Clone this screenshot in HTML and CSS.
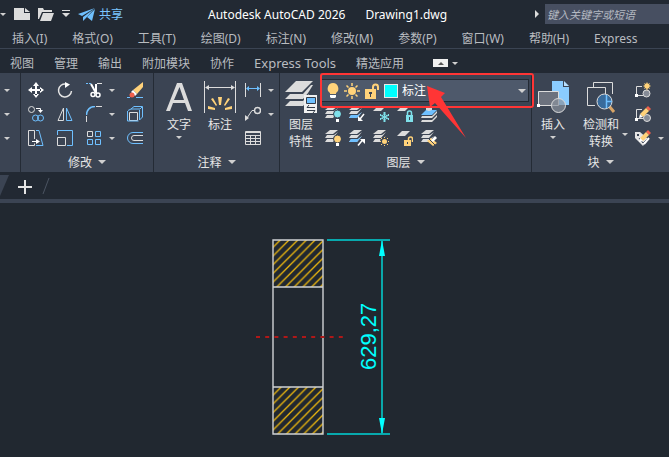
FILE: index.html
```html
<!DOCTYPE html>
<html lang="zh-CN">
<head>
    <meta charset="UTF-8">
    <meta name="viewport" content="width=device-width, initial-scale=1.0">
    <title>Autodesk AutoCAD 2026 - Drawing1.dwg</title>
    <link rel="stylesheet" href="styles.css">
</head>
<body>

    <!-- shared shapes -->
    <svg class="defs" width="0" height="0" aria-hidden="true">
        <defs>
            <g id="sheets">
                <path d="M5 0h8L8 4H0z"/>
                <path d="M2 5h7l4-3-5 6H0z"/>
                <path d="M2 9h7l4-3-5 6H0z"/>
            </g>
            <g id="pencil">
                <path d="M13 0l3 3-2 2-3-3z" fill="#f0604c"/>
                <path d="M11 2l3 3-6 6-3-3z" fill="#ffd27a"/>
                <path d="M5 8l3 3-4 1z" fill="#fff"/>
            </g>
        </defs>
    </svg>

    <header class="title-bar">
        <div class="quick-access">
            <span class="caret"></span>
            <button class="icon-btn" aria-label="新建">
                <svg width="16" height="12" viewBox="0 0 16 12" fill="#dcdcdc"><path d="M0 0h10v5h6v7H0z"/><path d="M11 0l5 4h-5z"/></svg>
            </button>
            <button class="icon-btn" aria-label="打开">
                <svg width="16" height="13" viewBox="0 0 16 13" fill="#dcdcdc"><path d="M0 0h5l1 2h8v2H4L1 11H0z"/><path d="M5 5h11l-3 8H2z"/></svg>
            </button>
            <button class="icon-btn" aria-label="自定义快速访问工具栏">
                <svg width="8" height="8" viewBox="0 0 8 8" fill="#dcdcdc"><path d="M0 0h8v1H0zM0 3h8L4 7z"/></svg>
            </button>
            <button class="share">
                <svg width="17" height="13" viewBox="0 0 17 13" fill="#6fc0ff"><path d="M17 0L0 6l4 2z"/><path d="M16 1L5 9v4l3-3z"/><path d="M17 1l-3 12-5-4z"/></svg>
                共享
            </button>
        </div>
        <div class="app-title"><span>Autodesk AutoCAD 2026</span><span>Drawing1.dwg</span></div>
        <div class="search">
            <span class="search-arrow"></span>
            <input type="text" placeholder="键入关键字或短语" aria-label="搜索">
        </div>
    </header>

    <nav class="menu-bar">
        <a href="#">插入(I)</a>
        <a href="#">格式(O)</a>
        <a href="#">工具(T)</a>
        <a href="#">绘图(D)</a>
        <a href="#">标注(N)</a>
        <a href="#">修改(M)</a>
        <a href="#">参数(P)</a>
        <a href="#">窗口(W)</a>
        <a href="#">帮助(H)</a>
        <a href="#">Express</a>
    </nav>

    <nav class="ribbon-tabs">
        <a href="#">视图</a>
        <a href="#">管理</a>
        <a href="#">输出</a>
        <a href="#">附加模块</a>
        <a href="#">协作</a>
        <a href="#" class="tab-latin">Express Tools</a>
        <a href="#">精选应用</a>
        <button class="minimize" aria-label="最小化功能区">
            <span class="minimize-box"></span><span class="caret"></span>
        </button>
    </nav>

    <div class="ribbon">
        <section class="panel">
            <div class="panel-body draw-body">
                <div class="tool-row"><span class="caret"></span></div>
                <div class="tool-row"><span class="caret"></span></div>
                <div class="tool-row"><span class="caret"></span></div>
            </div>
        </section>

        <!-- modify -->
        <section class="panel">
            <div class="panel-body modify-body">
                <div class="tool-grid modify-grid">
                    <button class="icon-btn" aria-label="移动">
                        <svg width="16" height="16" viewBox="0 0 16 16" fill="#fff"><path d="M7 3h2v10H7zM3 7h10v2H3zM8 0l3 4H5zM8 16l3-4H5zM0 8l4-3v6zM16 8l-4-3v6z"/></svg>
                    </button>
                    <button class="icon-btn" aria-label="旋转">
                        <svg width="16" height="16" viewBox="0 0 16 16"><path d="M9 2a6.500 6.500 0 1 0 5.500 7" fill="none" stroke="#e4e4e4" stroke-width="1.500"/><path d="M8 0l5 2.500L8 6z" fill="#fff"/></svg>
                    </button>
                    <button class="icon-btn" aria-label="修剪">
                        <svg width="16" height="16" viewBox="0 0 16 16"><path d="M0 1.500h6" stroke="#6fc0ff" stroke-dasharray="2 1"/><path d="M11 1.500h5" stroke="#e4e4e4"/><path d="M5 2l5 9M10 2v9" stroke="#fff" stroke-width="2"/><circle cx="7" cy="12.500" r="2" fill="none" stroke="#fff" stroke-width="1.500"/><circle cx="12" cy="13" r="2" fill="none" stroke="#fff" stroke-width="1.500"/></svg>
                    </button>
                    <span class="caret"></span>
                    <button class="icon-btn" aria-label="删除">
                        <svg width="16" height="16" viewBox="0 0 16 16"><path d="M0 15.500h3M9 15.500h7" stroke="#6fc0ff"/><path d="M16 0v5l-6 7-4-4z" fill="#ffd27a"/><path d="M6 8l4 4-2 2-4-4z" fill="#fff"/><circle cx="5" cy="13" r="2.500" fill="#f0604c"/></svg>
                    </button>

                    <button class="icon-btn" aria-label="复制">
                        <svg width="16" height="16" viewBox="0 0 16 16" fill="none"><circle cx="3.500" cy="3.500" r="3" stroke="#dcdcdc"/><path d="M8 2.500h4.500V5" stroke="#fff"/><path d="M10 4h5l-2.500 3z" fill="#fff"/><circle cx="7.500" cy="12" r="3" stroke="#6fc0ff"/><circle cx="12.500" cy="12" r="3" stroke="#6fc0ff"/></svg>
                    </button>
                    <button class="icon-btn" aria-label="镜像">
                        <svg width="16" height="16" viewBox="0 0 16 16" fill="none"><path d="M6.500 2v12.500H1z" stroke="#dcdcdc"/><path d="M9.500 2v12.500H15z" stroke="#6fc0ff"/></svg>
                    </button>
                    <button class="icon-btn" aria-label="圆角">
                        <svg width="16" height="16" viewBox="0 0 16 16" fill="none"><path d="M.5 9C.5 4 4 .5 9 .5" stroke="#6fc0ff" stroke-width="1.500"/><path d="M10 .5h6M.5 10v6" stroke="#dcdcdc"/></svg>
                    </button>
                    <span class="caret"></span>
                    <button class="icon-btn" aria-label="分解">
                        <svg width="16" height="16" viewBox="0 0 16 16" fill="none"><path d="M4 3l3-2.500h8.500L13 3zM15.500 1v10l-3 3M12.500 4v10M1 4.500l3-1.500" stroke="#6fc0ff"/><path d="M2.500 6.500h8v8h-8z" stroke="#dcdcdc"/><path d="M.5 5v10h11" stroke="#6fc0ff"/></svg>
                    </button>

                    <button class="icon-btn" aria-label="拉伸">
                        <svg width="16" height="16" viewBox="0 0 16 16" fill="none"><path d="M6.500 9V.5h-6v15h6v-2" stroke="#dcdcdc"/><path d="M8 .5h3l4 15H8" stroke="#6fc0ff"/><path d="M4 11.500h5" stroke="#fff"/><path d="M8 9l4 2.500L8 14z" fill="#fff"/></svg>
                    </button>
                    <button class="icon-btn" aria-label="缩放">
                        <svg width="16" height="16" viewBox="0 0 16 16" fill="none"><path d="M.5 5V.5h15v15H10" stroke="#6fc0ff"/><path d="M.5 7.500h8v8h-8z" stroke="#dcdcdc"/></svg>
                    </button>
                    <button class="icon-btn" aria-label="阵列">
                        <svg width="16" height="16" viewBox="0 0 16 16" fill="none"><path d="M1.500 1.500h5v5h-5z" stroke="#dcdcdc"/><path d="M9.500 1.500h5v5h-5zM1.500 9.500h5v5h-5zM9.500 9.500h5v5h-5z" stroke="#6fc0ff"/></svg>
                    </button>
                    <span class="caret"></span>
                    <button class="icon-btn" aria-label="偏移">
                        <svg width="16" height="16" viewBox="0 0 16 16" fill="none"><path d="M16 2.500H6a5.500 5.500 0 0 0 0 11h10" stroke="#6fc0ff"/><path d="M16 5.500H7a2.500 2.500 0 0 0 0 5h9" stroke="#dcdcdc"/></svg>
                    </button>
                </div>
            </div>
            <button class="panel-title">修改<span class="caret caret-lg"></span></button>
        </section>

        <!-- annotation -->
        <section class="panel">
            <div class="panel-body annotate-body">
                <button class="big-btn">
                    <svg width="32" height="32" viewBox="0 0 32 32"><path d="M3 30L14 2h5l10 28h-4l-3-8H10l-3 8zM11 19h10L16.500 6z" fill="#dcdcdc" fill-rule="evenodd"/></svg>
                    <span>文字</span>
                    <span class="caret"></span>
                </button>
                <button class="big-btn">
                    <svg width="32" height="32" viewBox="0 0 32 32"><path d="M.5 0v32M31.500 0v32M3 6.500h26" stroke="#dcdcdc"/><path d="M1 6.500l4-2.500v5zM31 6.500L27 4v5z" fill="#dcdcdc"/><path d="M14 16h4l-1 8h-2zM7 18l2-1 4 7-1 1zM26 18l-2-1-4 7 1 1zM4 25l7 2v2l-7-1zM28 25l-7 2v2l7-1z" fill="#ffd27a"/></svg>
                    <span>标注</span>
                </button>
                <div class="tool-grid small-grid">
                    <button class="icon-btn" aria-label="线性">
                        <svg width="16" height="16" viewBox="0 0 16 16"><path d="M.5 1v14M15.500 1v14" stroke="#dcdcdc"/><path d="M2 6.500h12" stroke="#6fc0ff"/><path d="M1 6.500L4 4v5zM15 6.500L12 4v5z" fill="#6fc0ff"/></svg>
                    </button>
                    <span class="caret"></span>
                    <button class="icon-btn" aria-label="引线">
                        <svg width="16" height="16" viewBox="0 0 16 16" fill="none"><circle cx="12.500" cy="4.500" r="3" stroke="#dcdcdc" stroke-width="1.500"/><path d="M9.500 4.500H7L2 12" stroke="#dcdcdc"/><path d="M0 15V9l4 3z" fill="#dcdcdc"/></svg>
                    </button>
                    <span class="caret"></span>
                    <button class="icon-btn" aria-label="表格">
                        <svg width="16" height="16" viewBox="0 0 16 16" fill="none" stroke="#dcdcdc"><path d="M.5 1.500h15v13H.5zM.5 2.500h15M.5 5.500h15M.5 8.500h15M.5 11.500h15M5.500 5v10M10.500 5v10"/></svg>
                    </button>
                </div>
            </div>
            <button class="panel-title">注释<span class="caret caret-lg"></span></button>
        </section>

        <!-- layers -->
        <section class="panel layers-panel">
            <div class="panel-body layers-body">
                <button class="big-btn">
                    <svg width="32" height="32" viewBox="0 0 32 32"><g fill="#dcdcdc"><path d="M11 0h17L17 11H0z"/><path d="M5 13h13l8-9h2l-5 8-5 6H0z"/><path d="M5 20h13l6-7v5l-6 7H0z"/></g><path d="M19 14h13v18H19z" fill="#f0f0f0"/><path d="M21.500 16.500h9v6h-9z" fill="#6fc0ff" stroke="#333b48"/><path d="M22 26.500h8M22 29.500h8M24 24l-2 2.500M28 32l2-2.500" stroke="#333b48"/></svg>
                    <span>图层</span>
                    <span>特性</span>
                </button>
                <div class="layer-tools">
                    <div class="layer-combo">
                        <svg width="14" height="16" viewBox="0 0 14 16"><path d="M7 0a5.500 5.500 0 0 1 3 10v1H4v-1A5.500 5.500 0 0 1 7 0z" fill="#ffd27a"/><path d="M4 12h6v2l-1 1H5l-1-1z" fill="#fff"/></svg>
                        <svg width="16" height="16" viewBox="0 0 16 16"><circle cx="8" cy="8" r="4" fill="#ffd27a"/><path d="M8 0v3M8 13v3M0 8h3M13 8h3M2.500 2.500l2 2M11.500 11.500l2 2M2.500 13.500l2-2M11.500 4.500l2-2" stroke="#ffd27a" stroke-width="1.500"/></svg>
                        <svg width="16" height="16" viewBox="0 0 16 16"><path d="M9 7V4a2.500 2.500 0 0 1 5 0v3" fill="none" stroke="#ffd27a" stroke-width="2"/><path d="M1 6h11v10H1z" fill="#ffd27a"/><path d="M5 9h3v2H7v3H6v-3H5z" fill="#3b4453"/></svg>
                        <span class="swatch"></span>
                        <select aria-label="图层">
                            <option>标注</option>
                        </select>
                        <span class="caret caret-lg"></span>
                    </div>
                    <div class="layer-grid">
                        <button class="icon-btn" aria-label="关">
                            <svg width="16" height="16" viewBox="0 0 16 16"><use href="#sheets" fill="#dcdcdc"/><circle cx="12.500" cy="8" r="4" fill="#7fe0ea" stroke="#3b4453"/><path d="M11 13h3v3h-3z" fill="#fff"/></svg>
                        </button>
                        <button class="icon-btn" aria-label="置为当前">
                            <svg width="16" height="16" viewBox="0 0 16 16"><use href="#sheets" fill="#dcdcdc"/><path d="M2 9h7l4-3-5 6H0z" fill="#6fc0ff"/><path d="M15 8l-4 5" stroke="#fff" stroke-width="1.500"/><path d="M9 10v5h5z" fill="#fff"/></svg>
                        </button>
                        <button class="icon-btn" aria-label="冻结">
                            <svg width="16" height="16" viewBox="0 0 16 16"><path d="M5 0h8L8 5H0z" fill="#dcdcdc"/><g fill="none" stroke="#7fe0ea"><circle cx="11.500" cy="11" r="2.500"/><path d="M11.500 6v10M7 8.500l9 5M7 13.500l9-5M10 7h3M10 15h3M7.500 10v-2M15.500 10v-2M7.500 12v2M15.500 12v2"/></g></svg>
                        </button>
                        <button class="icon-btn" aria-label="锁定">
                            <svg width="16" height="16" viewBox="0 0 16 16"><path d="M5 0h8L8 5H0z" fill="#dcdcdc"/><path d="M10.500 9V7a2 2 0 0 1 4 0v2" fill="none" stroke="#7fe0ea" stroke-width="1.500"/><path d="M9 9h7v7H9z" fill="#7fe0ea"/><path d="M12 11h1v3h-1z" fill="#3b4453"/></svg>
                        </button>
                        <button class="icon-btn" aria-label="匹配图层">
                            <svg width="16" height="16" viewBox="0 0 16 16"><path d="M5 4h11l-5 5H0z" fill="#6fc0ff"/><path d="M5 0h6v4l-3 1-3-1z" fill="#dcdcdc"/><path d="M1 10h10l5-5v2l-5 5H0zM1 14h10l5-5v2l-5 5H0z" fill="#dcdcdc"/></svg>
                        </button>
                        <button class="icon-btn" aria-label="打开所有图层">
                            <svg width="16" height="16" viewBox="0 0 16 16"><use href="#sheets" fill="#dcdcdc"/><circle cx="12.500" cy="9" r="4" fill="#ffd27a" stroke="#3b4453"/><path d="M11 13h3v3h-3z" fill="#fff"/></svg>
                        </button>
                        <button class="icon-btn" aria-label="更改为当前图层">
                            <svg width="16" height="16" viewBox="0 0 16 16"><use href="#sheets" fill="#dcdcdc"/><path d="M2 9h7l4-3-5 6H0z" fill="#6fc0ff"/><path d="M9 15.500l5-6" stroke="#fff" stroke-width="1.500"/><path d="M11 9h5v5z" fill="#fff"/></svg>
                        </button>
                        <button class="icon-btn" aria-label="解冻">
                            <svg width="16" height="16" viewBox="0 0 16 16"><use href="#sheets" fill="#dcdcdc"/><circle cx="11.500" cy="11.500" r="4.500" fill="#3b4453"/><circle cx="11.500" cy="11.500" r="2.500" fill="#ffd27a"/><path d="M11.500 7v1M11.500 15v1M7 11.500h1M15 11.500h1M8 8l1 1M14 14l1 1M8 15l1-1M14 9l1-1" stroke="#ffd27a"/></svg>
                        </button>
                        <button class="icon-btn" aria-label="解锁">
                            <svg width="16" height="16" viewBox="0 0 16 16"><path d="M5 1h8L8 6H0z" fill="#dcdcdc"/><path d="M11.500 10V9a2 2 0 0 1 4 0v3" fill="none" stroke="#ffd27a" stroke-width="1.500"/><path d="M7 10h7v6H7z" fill="#ffd27a"/><path d="M10 12h1v2h-1z" fill="#3b4453"/></svg>
                        </button>
                        <button class="icon-btn" aria-label="图层漫游">
                            <svg width="16" height="16" viewBox="0 0 16 16"><use href="#sheets" fill="#dcdcdc"/><path d="M6 11l4-3 6 5-4 3z" fill="#ffd27a"/><path d="M10 10l4-4 2 2-4 4z" fill="#fff"/><path d="M8 9l6 6" stroke="#3b4453"/></svg>
                        </button>
                    </div>
                </div>
            </div>
            <button class="panel-title">图层<span class="caret caret-lg"></span></button>

            <!-- callout on the layer list -->
            <div class="callout-frame"></div>
            <svg class="callout-arrow" width="39" height="52" viewBox="0 0 39 52"><path d="M0 0l18 7-4 4 25 41L8 17l-5 4z" fill="#ff3535"/></svg>
        </section>

        <!-- block -->
        <section class="panel">
            <div class="panel-body block-body">
                <button class="big-btn insert-btn">
                    <svg width="32" height="32" viewBox="0 0 32 32"><path d="M15 0h11v6h6v18H15z" fill="#8accff"/><path d="M27 0l5 5h-5z" fill="#b8e0ff"/><path d="M1.500 10.500h20v14h-20z" fill="#6c727e" stroke="#dcdcdc"/><circle cx="21.500" cy="24.500" r="7" fill="#8a919c" fill-opacity=".7" stroke="#dcdcdc"/><path d="M0 23h3v3H0z" fill="#fff"/></svg>
                    <span>插入</span>
                    <span class="caret"></span>
                </button>
                <div class="detect">
                    <button class="big-btn">
                        <svg width="32" height="32" viewBox="0 0 32 32"><path d="M8.500 6V1.500h19V13M10 24.500H2.500v-18h18V13" fill="none" stroke="#dcdcdc"/><path d="M24 25l5 6" stroke="#d9a566" stroke-width="3"/><circle cx="19.500" cy="20.500" r="7.500" fill="#386b9c" stroke="#dcdcdc"/><path d="M21.500 14v13M22 20.500h5" stroke="#6fc0ff" stroke-width="1.500"/></svg>
                        <span>检测和</span>
                        <span>转换</span>
                    </button>
                    <span class="caret"></span>
                </div>
                <div class="tool-grid small-grid">
                    <button class="icon-btn" aria-label="创建">
                        <svg width="16" height="16" viewBox="0 0 16 16"><path d="M7 4.500H1.500v9h7" fill="none" stroke="#dcdcdc"/><circle cx="11.500" cy="11.500" r="3.500" fill="#858b96" stroke="#dcdcdc"/><path d="M0 12h3v3H0z" fill="#fff"/><path d="M12 0l1 2 2-1-1 2 2 1-2 1 1 2-2-1-1 3-1-3-2 1 1-2-2-1 2-1-1-2 2 1z" fill="#ffd27a"/></svg>
                    </button>
                    <span></span>
                    <button class="icon-btn" aria-label="块编辑器">
                        <svg width="16" height="16" viewBox="0 0 16 16"><path d="M7 3.500H1.500v9h7" fill="none" stroke="#dcdcdc"/><circle cx="12" cy="12" r="3.500" fill="#858b96" stroke="#dcdcdc"/><path d="M0 12h3v3H0z" fill="#fff"/><use href="#pencil"/></svg>
                    </button>
                    <span></span>
                    <button class="icon-btn" aria-label="编辑属性">
                        <svg width="16" height="16" viewBox="0 0 16 16"><path d="M0 2h5l8 7-5 7-8-8z" fill="#e4e4e4"/><path d="M2 4h2v2H2z" fill="#3b4453"/><path d="M4 8l4 5 6-6" fill="none" stroke="#3b4453"/><path d="M9 14l5-6" stroke="#fff" stroke-width="2"/><use href="#pencil"/></svg>
                    </button>
                    <span class="caret"></span>
                </div>
            </div>
            <button class="panel-title">块<span class="caret caret-lg"></span></button>
        </section>
    </div>

    <div class="file-tabs">
        <span class="active-tab"></span>
        <button class="new-tab" aria-label="新图形">
            <svg width="14" height="14" viewBox="0 0 14 14"><path d="M6 0h2v6h6v2H8v6H6V8H0V6h6z" fill="#e4e4e4"/></svg>
        </button>
        <svg width="8" height="16" viewBox="0 0 8 16"><path d="M7 0L1 16" stroke="#4b5462"/></svg>
    </div>

    <main class="canvas">
        <svg width="669" height="254" viewBox="0 0 669 254">
            <defs>
                <pattern id="hatch" width="8.700" height="8.700" patternUnits="userSpaceOnUse" x="280.300" y="37">
                    <path d="M-1 1L1 -1M-1 9.700L9.700 -1M7.700 9.700L9.700 7.700" stroke="#f0b90c" stroke-width="1.300"/>
                </pattern>
            </defs>

            <!-- section -->
            <rect x="273" y="37" width="50" height="47" fill="url(#hatch)"/>
            <rect x="273" y="184" width="50" height="47" fill="url(#hatch)"/>
            <path d="M273 37h50v194h-50zM273 84h50M273 184h50" fill="none" stroke="#d0d2d5" stroke-width="1.400"/>
            <path d="M256 134h88" stroke="#b01818" stroke-width="2" stroke-dasharray="4 5.200"/>

            <!-- dimension -->
            <path d="M327 37h63M327 231h63" stroke="#00d4d6" stroke-width="1.300"/>
            <path d="M382 38v192" stroke="#0aa8aa" stroke-width="2"/>
            <path d="M382 37l3 16h-6zM382 231l3-16h-6z" fill="#00ffff"/>
            <text class="dim-text" transform="translate(376 167) rotate(-90)">629,27</text>
        </svg>
    </main>

</body>
</html>
```
FILE: styles.css
```css
* {
    box-sizing: border-box;
    margin: 0;
    padding: 0;
}

body {
    font-family: "Noto Sans", "Noto Sans CJK SC", sans-serif;
    font-size: 12px;
    color: #e6e6e6;
    background-color: #222933;
    display: flex;
    flex-direction: column;
    min-height: 100vh;
    overflow-x: hidden;
}

a {
    color: inherit;
    text-decoration: none;
    white-space: nowrap;
}

button {
    font: inherit;
    color: inherit;
    background: none;
    border: none;
    cursor: pointer;
    white-space: nowrap;
}

svg {
    display: block;
    flex-shrink: 0;
}

.defs {
    position: absolute;
}

.caret {
    width: 0;
    height: 0;
    border: 3px solid transparent;
    border-top-color: #d0d0d0;
    border-bottom: none;
}

.caret-lg {
    border-width: 4px;
    border-bottom: none;
}

/* title bar */
.title-bar {
    display: flex;
    align-items: center;
    height: 28px;
}

.quick-access {
    display: flex;
    align-items: center;
    gap: 8px;
    width: 208px;
}

.share {
    display: flex;
    align-items: center;
    gap: 4px;
    color: #7cc6ff;
}

.app-title {
    display: flex;
    gap: 20px;
    color: #fff;
    white-space: nowrap;
}

.search {
    display: flex;
    align-items: center;
    gap: 6px;
    margin-left: auto;
}

.search-arrow {
    border: 4px solid transparent;
    border-left-color: #dcdcdc;
    border-right: none;
}

.search input {
    width: 124px;
    height: 20px;
    padding: 0 2px;
    border: none;
    background-color: #474f61;
    color: #fff;
    font: italic 11px "Noto Sans", "Noto Sans CJK SC", sans-serif;
}

.search input::placeholder {
    color: #b4b9c2;
}

/* menus */
.menu-bar {
    display: flex;
    align-items: center;
    gap: 25px;
    height: 21px;
    padding-left: 12px;
    border-bottom: 1px solid #3b4453;
    color: #b9bcc0;
}

.ribbon-tabs {
    display: flex;
    align-items: center;
    gap: 20px;
    height: 24px;
    padding: 4px 0 0 10px;
    color: #b9bcc0;
}

.tab-latin {
    font-size: 13px;
}

.minimize {
    display: flex;
    align-items: center;
    gap: 4px;
    margin-left: 9px;
}

.minimize-box {
    display: flex;
    align-items: center;
    justify-content: center;
    width: 15px;
    height: 8px;
    background-color: #f0f0f0;
}

.minimize-box::before {
    content: "";
    border: 3px solid transparent;
    border-bottom-color: #555;
    border-top: none;
}

/* ribbon */
.ribbon {
    display: flex;
    height: 99px;
    background-color: #3b4453;
}

.panel {
    position: relative;
    display: flex;
    flex-direction: column;
    padding-top: 5px;
    border-right: 1px solid #242b35;
}

.panel:last-child {
    border-right: none;
}

.panel-body {
    display: flex;
    height: 72px;
}

.panel-title {
    display: flex;
    align-items: center;
    justify-content: center;
    gap: 6px;
    height: 22px;
    padding-top: 2px;
}

.draw-body {
    flex-direction: column;
    padding: 0 10px 0 4px;
}

.tool-row {
    display: flex;
    align-items: center;
    height: 24px;
}

.tool-grid {
    display: grid;
    grid-template-rows: repeat(3, 24px);
    align-items: center;
}

.modify-body {
    padding: 0 10px 0 7px;
}

.modify-grid {
    grid-template-columns: 29px 29px 23px 18px 16px;
}

.small-grid {
    grid-template-columns: 23px 6px;
}

.annotate-body {
    gap: 9px;
    padding: 0 5px 0 9px;
}

.big-btn {
    display: flex;
    flex-direction: column;
    align-items: center;
    min-width: 32px;
    padding-top: 3px;
    line-height: 17px;
}

.big-btn svg {
    margin-bottom: 3px;
}

.big-btn .caret {
    margin-top: 3px;
}

.layers-panel {
    flex: 1;
}

.layers-body {
    gap: 4px;
    padding: 0 2px 0 5px;
}

.layer-tools {
    flex: 1;
    padding-top: 1px;
}

.layer-combo {
    display: flex;
    align-items: center;
    gap: 4px;
    height: 23px;
    padding: 0 2px 0 4px;
    border: 1px solid #232a34;
    background-color: #4e596b;
}

.swatch {
    width: 14px;
    height: 14px;
    background-color: #00ffff;
    border: 1px solid #e8e8e8;
}

.layer-combo select {
    flex: 1;
    min-width: 0;
    appearance: none;
    border: none;
    background: none;
    color: #fff;
    font: inherit;
}

.layer-grid {
    display: grid;
    grid-template-columns: repeat(5, 16px);
    grid-template-rows: repeat(2, 24px);
    column-gap: 8px;
    align-items: center;
    padding-left: 4px;
}

.callout-frame {
    position: absolute;
    top: 0;
    left: 40px;
    right: -3px;
    height: 35px;
    border: 2px solid #ff3535;
    border-radius: 3px;
    z-index: 1;
    pointer-events: none;
}

.callout-arrow {
    position: absolute;
    top: 13px;
    left: 147px;
    z-index: 2;
    pointer-events: none;
}

.block-body {
    gap: 7px;
    padding: 0 5px;
}

.insert-btn {
    margin-right: 7px;
}

.detect {
    display: flex;
    align-items: center;
    gap: 3px;
}

.detect .caret {
    margin-top: 40px;
}

.detect .big-btn {
    align-self: flex-start;
}

/* drawing tabs */
.file-tabs {
    display: flex;
    align-items: center;
    height: 31px;
    border-bottom: 4px solid #3b4453;
}

.active-tab {
    width: 9px;
    height: 21px;
    background-color: #3b4453;
    clip-path: polygon(0 0, 100% 0, 0 100%);
}

.new-tab {
    margin: 2px 10px 0 9px;
}

/* drawing */
.canvas {
    flex: 1;
    background-color: #212830;
}

.dim-text {
    font-family: "Liberation Sans", sans-serif;
    font-size: 22px;
    fill: #00ffff;
}
```
